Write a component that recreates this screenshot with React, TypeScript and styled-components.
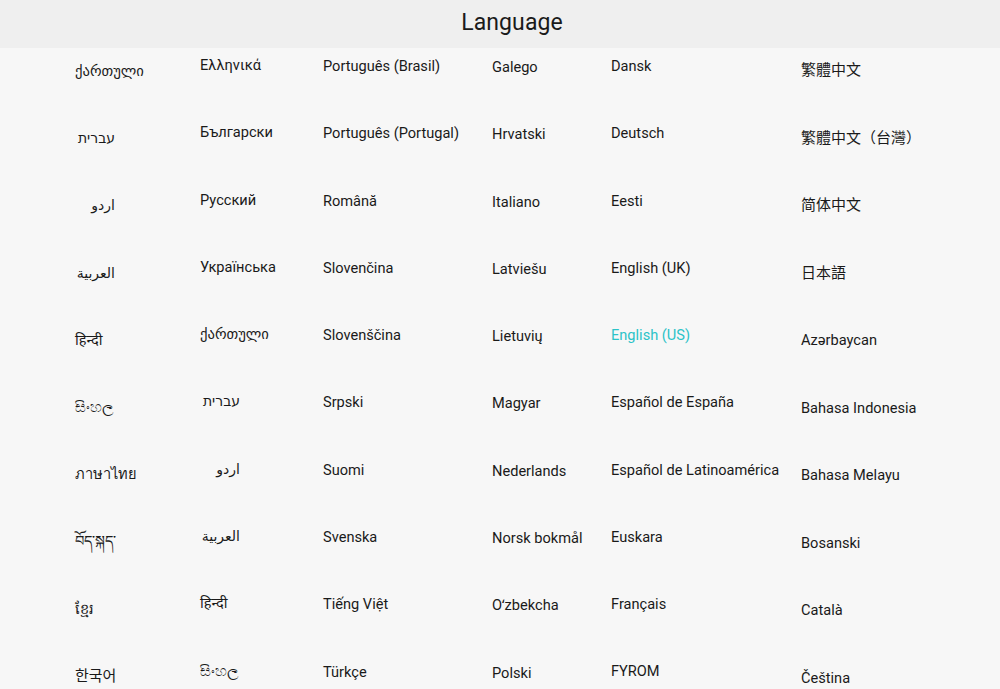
import React from "react";
import styled, { createGlobalStyle } from "styled-components";

const Global = createGlobalStyle`
  html, body { margin: 0; padding: 0; }
  body {
    background: #f7f7f7;
    font-family: Roboto, "Noto Sans", "DejaVu Sans", "Noto Sans CJK TC", sans-serif;
    color: #1c1c1c;
  }
`;

const Page = styled.div`
  width: 1000px;
  height: 689px;
  overflow: hidden;
  background: #f7f7f7;
  display: flex;
  flex-direction: column;
`;

const Header = styled.header`
  height: 48px;
  flex: 0 0 48px;
  background: #efefef;
  display: flex;
  align-items: center;
  justify-content: center;
  padding-left: 24px;
  padding-bottom: 4px;
  box-sizing: border-box;
`;

const Title = styled.h1`
  margin: 0;
  font-size: 23px;
  font-weight: 400;
  color: #1a1a1a;
  letter-spacing: 0.1px;
`;

const Grid = styled.div`
  display: grid;
  grid-template-columns: 125px 123px 169px 119px 190px 1fr;
  padding-left: 75px;
  flex: 1;
  overflow: hidden;
`;

const Column = styled.div<{ $top: number; $row: number }>`
  display: flex;
  flex-direction: column;
  padding-top: ${(p) => p.$top}px;
  & > * {
    height: ${(p) => p.$row}px;
    flex: 0 0 ${(p) => p.$row}px;
  }
`;

const Item = styled.div<{ $active?: boolean; $rtl?: boolean; $cjk?: boolean }>`
  font-size: 14.6px;
  line-height: 20px;
  white-space: nowrap;
  color: ${(p) => (p.$active ? "#2cc3c8" : "#1a1a1a")};
  ${(p) =>
    p.$rtl
      ? `direction: rtl; text-align: right; width: 40px; font-family: "DejaVu Sans", "Noto Sans", sans-serif; font-size: 14px;`
      : ""}
  ${(p) =>
    p.$cjk ? `font-family: Roboto, "Noto Sans CJK TC", "Noto Sans CJK SC", sans-serif; font-size: 15px;` : ""}
`;

type Entry = { t: string; rtl?: boolean; cjk?: boolean; active?: boolean };

const columns: { top: number; row: number; items: Entry[] }[] = [
  {
    top: 13,
    row: 67.2,
    items: [
      { t: "ქართული" },
      { t: "עברית", rtl: true },
      { t: "اردو", rtl: true },
      { t: "العربية", rtl: true },
      { t: "हिन्दी" },
      { t: "සිංහල" },
      { t: "ภาษาไทย" },
      { t: "བོད་སྐད་" },
      { t: "ខ្មែរ" },
      { t: "한국어", cjk: true },
    ],
  },
  {
    top: 7,
    row: 67.3,
    items: [
      { t: "Ελληνικά" },
      { t: "Български" },
      { t: "Русский" },
      { t: "Українська" },
      { t: "ქართული" },
      { t: "עברית", rtl: true },
      { t: "اردو", rtl: true },
      { t: "العربية", rtl: true },
      { t: "हिन्दी" },
      { t: "සිංහල" },
    ],
  },
  {
    top: 8,
    row: 67.3,
    items: [
      { t: "Português (Brasil)" },
      { t: "Português (Portugal)" },
      { t: "Română" },
      { t: "Slovenčina" },
      { t: "Slovenščina" },
      { t: "Srpski" },
      { t: "Suomi" },
      { t: "Svenska" },
      { t: "Tiếng Việt" },
      { t: "Türkçe" },
    ],
  },
  {
    top: 9,
    row: 67.3,
    items: [
      { t: "Galego" },
      { t: "Hrvatski" },
      { t: "Italiano" },
      { t: "Latviešu" },
      { t: "Lietuvių" },
      { t: "Magyar" },
      { t: "Nederlands" },
      { t: "Norsk bokmål" },
      { t: "Oʻzbekcha" },
      { t: "Polski" },
    ],
  },
  {
    top: 8,
    row: 67.25,
    items: [
      { t: "Dansk" },
      { t: "Deutsch" },
      { t: "Eesti" },
      { t: "English (UK)" },
      { t: "English (US)", active: true },
      { t: "Español de España" },
      { t: "Español de Latinoamérica" },
      { t: "Euskara" },
      { t: "Français" },
      { t: "FYROM" },
    ],
  },
  {
    top: 12,
    row: 67.5,
    items: [
      { t: "繁體中文", cjk: true },
      { t: "繁體中文（台灣）", cjk: true },
      { t: "简体中文", cjk: true },
      { t: "日本語", cjk: true },
      { t: "Azərbaycan" },
      { t: "Bahasa Indonesia" },
      { t: "Bahasa Melayu" },
      { t: "Bosanski" },
      { t: "Català" },
      { t: "Čeština" },
    ],
  },
];

export default function App() {
  return (
    <>
      <Global />
      <Page>
        <Header>
          <Title>Language</Title>
        </Header>
        <Grid>
          {columns.map((col, i) => (
            <Column key={i} $top={col.top} $row={col.row}>
              {col.items.map((it, j) => (
                <Item key={j} $rtl={it.rtl} $cjk={it.cjk} $active={it.active}>
                  {it.t}
                </Item>
              ))}
            </Column>
          ))}
        </Grid>
      </Page>
    </>
  );
}
